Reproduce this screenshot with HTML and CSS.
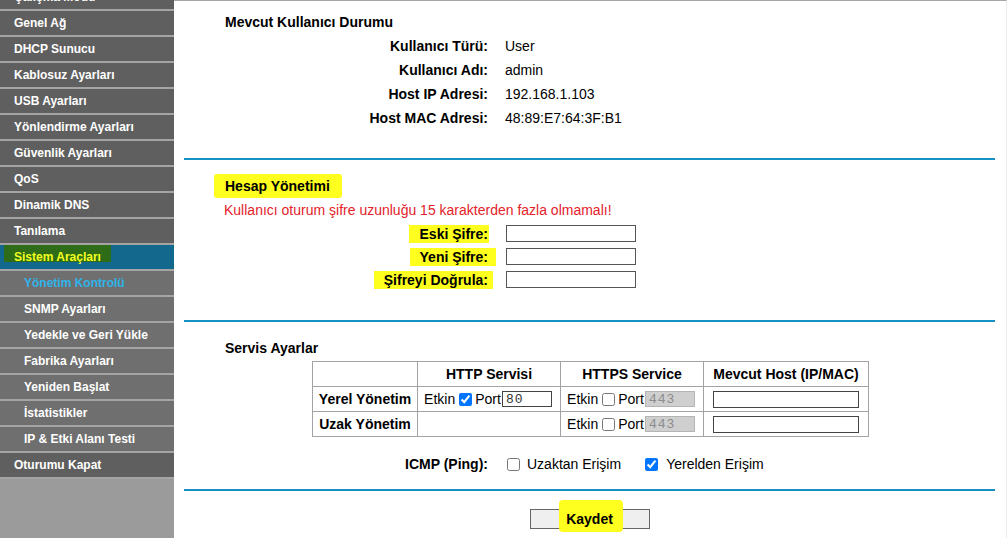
FILE: index.html
```html
<!DOCTYPE html>
<html lang="tr">
<head>
<meta charset="utf-8">
<title>Yönetim Kontrolü</title>
<link rel="stylesheet" href="styles.css">
</head>
<body>
<div class="page">
  <nav class="sidebar">
    <ul class="menu">
      <li class="menu-item">Çalışma Modu</li>
      <li class="menu-item">Genel Ağ</li>
      <li class="menu-item">DHCP Sunucu</li>
      <li class="menu-item">Kablosuz Ayarları</li>
      <li class="menu-item">USB Ayarları</li>
      <li class="menu-item">Yönlendirme Ayarları</li>
      <li class="menu-item">Güvenlik Ayarları</li>
      <li class="menu-item">QoS</li>
      <li class="menu-item">Dinamik DNS</li>
      <li class="menu-item">Tanılama</li>
      <li class="menu-item active"><span class="side-marker">Sistem Araçları</span></li>
      <li class="menu-item sub current">Yönetim Kontrolü</li>
      <li class="menu-item sub">SNMP Ayarları</li>
      <li class="menu-item sub">Yedekle ve Geri Yükle</li>
      <li class="menu-item sub">Fabrika Ayarları</li>
      <li class="menu-item sub">Yeniden Başlat</li>
      <li class="menu-item sub">İstatistikler</li>
      <li class="menu-item sub">IP &amp; Etki Alanı Testi</li>
      <li class="menu-item">Oturumu Kapat</li>
    </ul>
  </nav>

  <main class="content">
    <section class="panel panel-status">
      <h2 class="panel-title">Mevcut Kullanıcı Durumu</h2>
      <div class="form-grid status-grid">
        <div class="label">Kullanıcı Türü:</div><div class="value">User</div>
        <div class="label">Kullanıcı Adı:</div><div class="value">admin</div>
        <div class="label">Host IP Adresi:</div><div class="value">192.168.1.103</div>
        <div class="label">Host MAC Adresi:</div><div class="value">48:89:E7:64:3F:B1</div>
      </div>
    </section>

    <hr class="divider">

    <section class="panel panel-account">
      <h2 class="panel-title title-marked"><span class="marker marker-title">Hesap Yönetimi</span></h2>
      <p class="warning">Kullanıcı oturum şifre uzunluğu 15 karakterden fazla olmamalı!</p>
      <div class="form-grid pass-grid">
        <div class="label"><span class="marker m-old">Eski Şifre:</span></div>
        <div class="value"><input class="text-input" type="password"></div>
        <div class="label"><span class="marker m-new">Yeni Şifre:</span></div>
        <div class="value"><input class="text-input" type="password"></div>
        <div class="label"><span class="marker m-confirm">Şifreyi Doğrula:</span></div>
        <div class="value"><input class="text-input" type="password"></div>
      </div>
    </section>

    <hr class="divider">

    <section class="panel panel-service">
      <h2 class="panel-title">Servis Ayarlar</h2>
      <table class="svc-table">
        <colgroup>
          <col class="col-1"><col class="col-2"><col class="col-3"><col class="col-4">
        </colgroup>
        <thead>
          <tr><th></th><th>HTTP Servisi</th><th>HTTPS Service</th><th>Mevcut Host (IP/MAC)</th></tr>
        </thead>
        <tbody>
          <tr>
            <th>Yerel Yönetim</th>
            <td><span class="cell-flex">Etkin<input class="check" type="checkbox" checked>Port<input class="port" type="text" value="80"></span></td>
            <td><span class="cell-flex">Etkin<input class="check" type="checkbox">Port<input class="port" type="text" value="443" disabled></span></td>
            <td><input class="host" type="text"></td>
          </tr>
          <tr>
            <th>Uzak Yönetim</th>
            <td></td>
            <td><span class="cell-flex">Etkin<input class="check" type="checkbox">Port<input class="port" type="text" value="443" disabled></span></td>
            <td><input class="host" type="text"></td>
          </tr>
        </tbody>
      </table>
      <div class="form-grid icmp-grid">
        <div class="label">ICMP (Ping):</div>
        <div class="value icmp-options">
          <input class="icmp-check" type="checkbox"><span>Uzaktan Erişim</span>
          <input class="icmp-check second" type="checkbox" checked><span>Yerelden Erişim</span>
        </div>
      </div>
    </section>

    <hr class="divider">

    <div class="actions">
      <button class="btn" type="button"><span class="marker m-btn">Kaydet</span></button>
    </div>
  </main>
</div>
</body>
</html>
```

FILE: styles.css
```css
* { box-sizing: border-box; }

html, body {
  margin: 0;
  padding: 0;
  height: 100%;
}

body {
  font-family: "Liberation Sans", Arial, sans-serif;
  font-size: 14px;
  color: #000;
  background: #fff;
  overflow: hidden;
}

.page {
  display: flex;
  height: 538px;
}

/* ---------- sidebar ---------- */
.sidebar {
  width: 174px;
  flex: none;
  background: #9b9b9b;
  overflow: hidden;
}

.menu {
  list-style: none;
  margin: -15px 0 0;
  padding: 0;
}

.menu-item {
  height: 26px;
  line-height: 24px;
  border-bottom: 2px solid #a4a4a4;
  background: #5f5f5f;
  color: #fff;
  font-size: 12px;
  font-weight: bold;
  padding-left: 14px;
  white-space: nowrap;
}

.menu-item.sub {
  background: #6f6f6f;
  padding-left: 24px;
}

.menu-item.active {
  background: #13698d;
}

.menu-item.current {
  color: #2fb4ea;
}

.side-marker {
  display: inline-block;
  vertical-align: top;
  line-height: 24px;
  margin-left: -10px;
  padding: 0 10px 0 10px;
  color: #f2ff1e;
  background: linear-gradient(#2f6c18, #2f6c18) no-repeat top left / 100% 17px;
}

/* ---------- content ---------- */
.content {
  flex: 1;
  background: #fff;
  border-top: 1px solid #a6a6a6;
  border-right: 1px solid #ececec;
  padding: 0 11px 0 10px;
}

.panel-title {
  margin: 0;
  padding-left: 41px;
  font-size: 14px;
  line-height: 16px;
  font-weight: bold;
}

.panel-status {
  padding-top: 13px;
}

.form-grid {
  display: grid;
  grid-template-columns: 304px 1fr;
  column-gap: 17px;
  align-items: center;
}

.label {
  text-align: right;
  font-weight: bold;
  white-space: nowrap;
}

.value {
  white-space: nowrap;
}

.status-grid {
  margin-top: 4px;
  grid-auto-rows: 24px;
}

.divider {
  border: 0;
  height: 2px;
  margin: 0;
  background: #1690c2;
}

.panel-status + .divider { margin-top: 28px; }

/* account */
.title-marked {
  margin-top: 14px;
  padding-left: 41px;
  line-height: 24px;
}

.marker {
  background: #ffff1f;
}

.marker-title {
  display: inline-block;
  line-height: 16px;
  padding: 4px 12px 4px 11px;
  margin-left: -11px;
  border-radius: 3px;
}

.warning {
  margin: 4px 0 0;
  padding-left: 40px;
  line-height: 16px;
  color: #e3222a;
}

.pass-grid {
  margin-top: 4px;
  grid-auto-rows: 23px;
}

.pass-grid .label .marker {
  display: inline-block;
  line-height: 16px;
  padding-top: 1px;
  padding-bottom: 1px;
}

.m-old { padding-left: 11px; padding-right: 1px; margin-right: -1px; }
.m-new { padding-left: 10px; padding-right: 8px; margin-right: -8px; }
.m-confirm { padding-left: 10px; padding-right: 5px; margin-right: -5px; }

.text-input {
  display: block;
  width: 130px;
  height: 17px;
  margin: 0 0 0 1px;
  border: 1px solid #555;
  padding: 0 2px;
  background: #fff;
  font: 13px "Liberation Mono", monospace;
}

.panel-account + .divider { margin-top: 29px; }

/* service */
.panel-service .panel-title {
  margin-top: 18px;
}

.svc-table {
  margin: 5px 0 0 128px;
  border-collapse: collapse;
  table-layout: fixed;
  width: 556px;
}

.col-1 { width: 105px; }
.col-2 { width: 143px; }
.col-3 { width: 143px; }
.col-4 { width: 165px; }

.svc-table th,
.svc-table td {
  border: 1px solid #a3a3a3;
  height: 25px;
  padding: 0;
  text-align: center;
  vertical-align: middle;
  white-space: nowrap;
  font-size: 14px;
}

.svc-table td { font-weight: normal; }

.cell-flex {
  display: inline-flex;
  align-items: center;
  height: 24px;
  vertical-align: middle;
  margin-left: -2px;
}

.check {
  width: 13px;
  height: 13px;
  margin: 0 3px 0 4px;
  flex: none;
}

.port {
  width: 50px;
  height: 16px;
  margin: 0 0 0 1px;
  padding: 0 0 0 3px;
  border: 1px solid #444;
  background: #fff;
  color: #333;
  font: 13px "Liberation Mono", monospace;
  letter-spacing: 1px;
  flex: none;
}

.port:disabled {
  background: #cfcfcf;
  border-color: #b4b4b4;
  color: #8c8c8c;
}

.host {
  width: 146px;
  height: 17px;
  margin: 0;
  padding: 0 2px;
  border: 1px solid #444;
  background: #fff;
  vertical-align: middle;
}

.icmp-grid {
  margin-top: 16px;
  grid-auto-rows: 22px;
}

.icmp-options {
  display: flex;
  align-items: center;
}

.icmp-check {
  width: 13px;
  height: 13px;
  margin: 0 7px 0 2px;
}

.icmp-check.second {
  margin-left: 24px;
  margin-right: 8px;
}

.panel-service + .divider { margin-top: 14px; }

/* actions */
.actions {
  padding-top: 18px;
  display: flex;
  justify-content: center;
}

.btn {
  width: 120px;
  height: 20px;
  padding: 0;
  margin: 0;
  border: 1px solid #666;
  border-radius: 0;
  background: #efefef;
  color: #000;
  font: bold 14px "Liberation Sans", Arial, sans-serif;
  line-height: 16px;
  overflow: visible;
}

.m-btn {
  display: inline-block;
  line-height: 16px;
  padding: 11px 10px 5px 7px;
  margin: -11px -10px -5px -7px;
  border-radius: 4px;
}
```
